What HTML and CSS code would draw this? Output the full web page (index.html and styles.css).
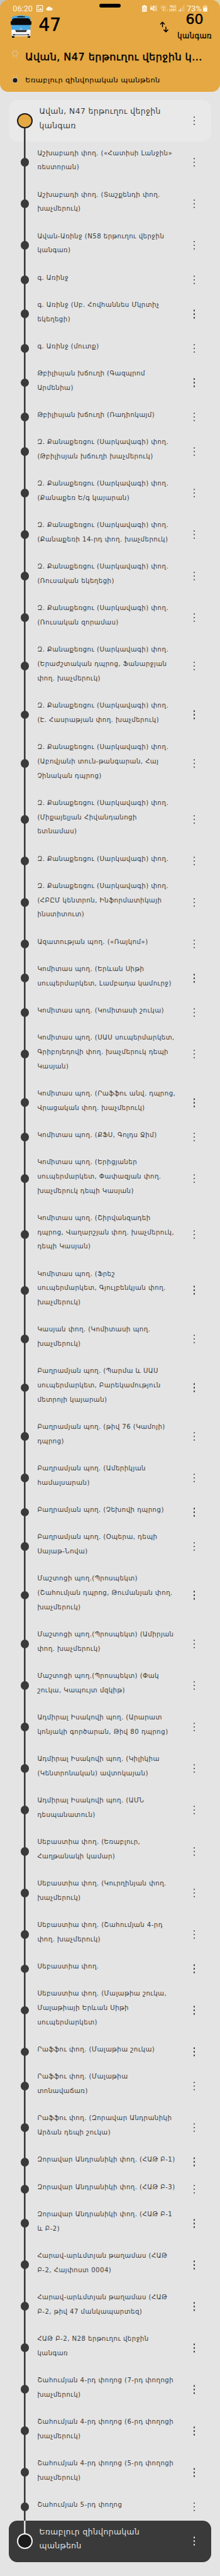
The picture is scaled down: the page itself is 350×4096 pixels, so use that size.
FILE: index.html
```html
<!DOCTYPE html>
<html lang="hy">
<head>
<meta charset="utf-8">
<title>47</title>
<link rel="stylesheet" href="styles.css">
</head>
<body>
<header class="header">
  <div class="status">
    <span class="clock">06:20</span>
    <svg class="s-pic" width="10.4" height="10.8" viewBox="0 0 20 20" preserveAspectRatio="none"><path fill-rule="evenodd" d="M2 0h16a2 2 0 0 1 2 2v16a2 2 0 0 1-2 2H2a2 2 0 0 1-2-2V2a2 2 0 0 1 2-2zm.4 2.4v15.2h15.2V2.400z"/><path d="M3.500 15.500l3.500-4.500 2.300 2.600L13 8.500l4 7z"/><circle cx="6" cy="6.500" r="1.700"/></svg>
    <svg class="s-cloud" width="11.200" height="6.800" viewBox="0 0 24 15"><path d="M5 15a5 5 0 0 1-.3-9.800A7 7 0 0 1 17.500 5 5 5 0 0 1 19 15z"/></svg>
    <span class="pill"></span>
    <span class="grow"></span>
    <svg class="s-save" width="7.600" height="10.800" viewBox="0 0 14 20"><path d="M4.500 0h5v2H12a2 2 0 0 1 2 2v14a2 2 0 0 1-2 2H2a2 2 0 0 1-2-2V4a2 2 0 0 1 2-2h2.500z"/><path class="cut" d="M7 7l2.500 4M10.800 12l-1 3H8M3.200 12l1 3H6M4.500 11L6.500 7.500"/></svg>
    <svg class="s-mute" width="10.800" height="10.600" viewBox="0 0 20 20"><path d="M0 6.500h3L12 15v4l-6-5H0zM6 5l6-5v11z"/><path class="ln" d="M.5 1l11.500 13"/><path class="ln" d="M14.500 3l1.500 2-1.500 2.500 1.500 2.500-1.500 2.500 1.500 2.500-1.500 2.500M18.500 1L20 3.500 18.500 6 20 9l-1.500 3 1.500 3-1.500 3.500" transform="translate(-.8 0)"/></svg>
    <svg class="s-wifi" width="13.600" height="10.800" viewBox="0 0 25 20"><path class="ln faint" d="M1 6Q11 -3 21 6"/><path class="ln" d="M4 9.500Q11 3.500 18 9.500M7 13Q11 9.500 15 13"/><circle cx="11" cy="16" r="1.800"/><path class="ln faint thin" d="M17.500 12v7M15.500 17l2 2 2-2M22.500 19v-7M20.500 14l2-2 2 2"/></svg>
    <span class="volte"><b>Vo))</b><b>LTE1</b></span>
    <svg class="s-sig" width="9.600" height="10.200" viewBox="0 0 18 20"><path d="M0 15.500h2.400V20H0zM5 11h2.400v9H5z"/><path class="fade" d="M10 6h2.400v14H10zM15 0h2.400v20H15z"/></svg>
    <span class="pct">73%</span>
    <svg class="s-bat" width="6.800" height="10.600" viewBox="0 0 14 20" preserveAspectRatio="none"><path class="fade" d="M4 0h6v2h2a2 2 0 0 1 2 2v3H0V4a2 2 0 0 1 2-2h2z"/><path d="M0 7h14v11.500a1.500 1.500 0 0 1-1.500 1.500h-11A1.500 1.500 0 0 1 0 18.500z"/></svg>
  </div>
  <div class="route">
    <svg class="bus" width="33" height="36.200" viewBox="0 0 66 66" preserveAspectRatio="none">
      <path fill="#0b0b0b" d="M4 58h8v6a2 2 0 0 1-2 2H6a2 2 0 0 1-2-2zM54 58h8v6a2 2 0 0 1-2 2h-4a2 2 0 0 1-2-2z"/>
      <path fill="#4aa8e2" d="M3 45V11Q3 4 10 3Q33-2.500 56 3Q63 4 63 11V45z"/>
      <path fill="#f4f4f6" d="M3 43H63V57Q63 61 59 61H7Q3 61 3 57z"/>
      <path fill="#0b0b0b" d="M0 18H3Q5 9 12 9H54Q61 9 63 18H66V28H63V28.500H3V28H0zM20 4.500Q33 1.500 46 4.500V6.500H20zM15 43.500H51L49 49H17z"/>
      <path fill="#2f2d35" d="M7 55h6v1h40v-1h6v4h-6v-1H13v1H7z"/>
      <path fill="#fff" d="M3.500 43h8l3 5-5 1.500-6-1zM62.500 43h-8l-3 5 5 1.500 6-1z"/>
      <ellipse cx="33" cy="40" rx="4" ry="2.200" fill="none" stroke="#c6dff0" stroke-width=".8"/>
      <path fill="none" stroke="#c6dff0" stroke-width=".8" d="M31 41.500l1-3 2 3 1-3M18 45.500h30"/>
    </svg>
    <span class="number">47</span>
    <span class="grow"></span>
    <svg class="swap" width="15" height="18" viewBox="0 0 15 18"><path d="M4.500 9.300V1.300M1 4.800l3.500-3.500L8 4.800M9.900 8.400v8.200M6.300 13.100l3.600 3.500 3.600-3.500"/></svg>
    <div class="count"><span class="sixty">60</span><span class="unit">կանգառ</span></div>
  </div>
  <div class="end from">
    <svg class="mark" width="14" height="24" viewBox="0 0 14 24"><path class="leg" d="M4.600 10.500v4M9.300 10.500v4"/><circle class="hollow" cx="7" cy="6" r="4.100"/></svg>
    <span>Ավան, N47 երթուղու վերջին կ...</span>
  </div>
  <div class="end to">
    <svg class="mark" width="14" height="20" viewBox="0 0 14 20"><path class="leg" d="M4.600 1.400v5.500M9.300 1.400v5.500"/><circle class="solid" cx="7" cy="10.800" r="4.100"/></svg>
    <span>Եռաբլուր զինվորական պանթեոն</span>
  </div>
</header>
<ul class="stops">
  <li class="stop first"><p>Ավան, N47 երթուղու վերջին<br>կանգառ</p></li>
  <li class="stop"><p>Աշխաբադի փող. («Հատիսի Լանջին»<br>ռեստորան)</p></li>
  <li class="stop"><p>Աշխաբադի փող. (Տաշքենդի փող.<br>խաչմերուկ)</p></li>
  <li class="stop"><p>Ավան-Առինջ (N58 երթուղու վերջին<br>կանգառ)</p></li>
  <li class="stop"><p>գ. Առինջ</p></li>
  <li class="stop"><p>գ. Առինջ (Սբ. Հովհաննես Մկրտիչ<br>եկեղեցի)</p></li>
  <li class="stop"><p>գ. Առինջ (մուտք)</p></li>
  <li class="stop"><p>Թբիլիսյան խճուղի (Գազպրոմ<br>Արմենիա)</p></li>
  <li class="stop"><p>Թբիլիսյան խճուղի (Ռադիոկայմ)</p></li>
  <li class="stop"><p>Զ. Քանաքեռցու (Սարկավագի) փող.<br>(Թբիլիսյան խճուղի խաչմերուկ)</p></li>
  <li class="stop"><p>Զ. Քանաքեռցու (Սարկավագի) փող.<br>(Քանաքեռ Ե/գ կայարան)</p></li>
  <li class="stop"><p>Զ. Քանաքեռցու (Սարկավագի) փող.<br>(Քանաքեռի 14-րդ փող. խաչմերուկ)</p></li>
  <li class="stop"><p>Զ. Քանաքեռցու (Սարկավագի) փող.<br>(Ռուսական եկեղեցի)</p></li>
  <li class="stop"><p>Զ. Քանաքեռցու (Սարկավագի) փող.<br>(Ռուսական զորամաս)</p></li>
  <li class="stop"><p>Զ. Քանաքեռցու (Սարկավագի) փող.<br>(Երաժշտական դպրոց, Ֆանարջյան<br>փող. խաչմերուկ)</p></li>
  <li class="stop"><p>Զ. Քանաքեռցու (Սարկավագի) փող.<br>(Է. Հասրաթյան փող. խաչմերուկ)</p></li>
  <li class="stop"><p>Զ. Քանաքեռցու (Սարկավագի) փող.<br>(Աբովյանի տուն-թանգարան, Հայ<br>Չինական դպրոց)</p></li>
  <li class="stop"><p>Զ. Քանաքեռցու (Սարկավագի) փող.<br>(Միքայելյան Հիվանդանոցի<br>ետնամաս)</p></li>
  <li class="stop"><p>Զ. Քանաքեռցու (Սարկավագի) փող.</p></li>
  <li class="stop"><p>Զ. Քանաքեռցու (Սարկավագի) փող.<br>(ՀԲԸՄ կենտրոն, Ինֆորմատիկայի<br>ինստիտուտ)</p></li>
  <li class="stop"><p>Ազատության պող. («Ռայկոմ»)</p></li>
  <li class="stop"><p>Կոմիտաս պող. (Երևան Սիթի<br>սուպերմարկետ, Լամբադա կամուրջ)</p></li>
  <li class="stop"><p>Կոմիտաս պող. (Կոմիտասի շուկա)</p></li>
  <li class="stop"><p>Կոմիտաս պող. (ՍԱՍ սուպերմարկետ,<br>Գրիբոյեդովի փող. խաչմերուկ դեպի<br>Կասյան)</p></li>
  <li class="stop"><p>Կոմիտաս պող. (Րաֆֆու անվ. դպրոց,<br>Վրացական փող. խաչմերուկ)</p></li>
  <li class="stop"><p>Կոմիտաս պող. (ՔՖՍ, Գոլդս Ջիմ)</p></li>
  <li class="stop"><p>Կոմիտաս պող. (Երիցյաներ<br>սուպերմարկետ, Փափազյան փող.<br>խաչմերուկ դեպի Կասյան)</p></li>
  <li class="stop"><p>Կոմիտաս պող. (Շիրվանզադեի<br>դպրոց, Վաղարշյան փող. խաչմերուկ,<br>դեպի Կասյան)</p></li>
  <li class="stop"><p>Կոմիտաս պող. (Ֆրեշ<br>սուպերմարկետ, Գյուլբենկյան փող.<br>խաչմերուկ)</p></li>
  <li class="stop"><p>Կասյան փող. (Կոմիտասի պող.<br>խաչմերուկ)</p></li>
  <li class="stop"><p>Բաղրամյան պող. (Պարմա և ՍԱՍ<br>սուպերմարկետ, Բարեկամություն<br>մետրոյի կայարան)</p></li>
  <li class="stop"><p>Բաղրամյան պող. (թիվ 76 (Կամոյի)<br>դպրոց)</p></li>
  <li class="stop"><p>Բաղրամյան պող. (Ամերիկյան<br>համալսարան)</p></li>
  <li class="stop"><p>Բաղրամյան պող. (Չեխովի դպրոց)</p></li>
  <li class="stop"><p>Բաղրամյան պող. (Օպերա, դեպի<br>Սայաթ-Նովա)</p></li>
  <li class="stop"><p>Մաշտոցի պող.(Պրոսպեկտ)<br>(Շահումյան դպրոց, Թումանյան փող.<br>խաչմերուկ)</p></li>
  <li class="stop"><p>Մաշտոցի պող.(Պրոսպեկտ) (Ամիրյան<br>փող. խաչմերուկ)</p></li>
  <li class="stop"><p>Մաշտոցի պող.(Պրոսպեկտ) (Փակ<br>շուկա, Կապույտ մզկիթ)</p></li>
  <li class="stop"><p>Ադմիրալ Իսակովի պող. (Արարատ<br>կոնյակի գործարան, Թիվ 80 դպրոց)</p></li>
  <li class="stop"><p>Ադմիրալ Իսակովի պող. (Կիլիկիա<br>(Կենտրոնական) ավտոկայան)</p></li>
  <li class="stop"><p>Ադմիրալ Իսակովի պող. (ԱՄՆ<br>դեսպանատուն)</p></li>
  <li class="stop"><p>Սեբաստիա փող. (Եռաբլուր,<br>Հաղթանակի կամար)</p></li>
  <li class="stop"><p>Սեբաստիա փող. (Կուրղինյան փող.<br>խաչմերուկ)</p></li>
  <li class="stop"><p>Սեբաստիա փող. (Շահումյան 4-րդ<br>փող. խաչմերուկ)</p></li>
  <li class="stop"><p>Սեբաստիա փող.</p></li>
  <li class="stop"><p>Սեբաստիա փող. (Մալաթիա շուկա,<br>Մալաթիայի Երևան Սիթի<br>սուպերմարկետ)</p></li>
  <li class="stop"><p>Րաֆֆու փող. (Մալաթիա շուկա)</p></li>
  <li class="stop"><p>Րաֆֆու փող. (Մալաթիա<br>տոնավաճառ)</p></li>
  <li class="stop"><p>Րաֆֆու փող. (Զորավար Անդրանիկի<br>Արձան դեպի շուկա)</p></li>
  <li class="stop"><p>Զորավար Անդրանիկի փող. (ՀԱԹ Բ-1)</p></li>
  <li class="stop"><p>Զորավար Անդրանիկի փող. (ՀԱԹ Բ-3)</p></li>
  <li class="stop"><p>Զորավար Անդրանիկի փող. (ՀԱԹ Բ-1<br>և Բ-2)</p></li>
  <li class="stop"><p>Հարավ-արևմտյան թաղամաս (ՀԱԹ<br>Բ-2, Հայփոստ 0004)</p></li>
  <li class="stop"><p>Հարավ-արևմտյան թաղամաս (ՀԱԹ<br>Բ-2, թիվ 47 մանկապարտեզ)</p></li>
  <li class="stop"><p>ՀԱԹ Բ-2, N28 երթուղու վերջին<br>կանգառ</p></li>
  <li class="stop"><p>Շահումյան 4-րդ փողոց (7-րդ փողոցի<br>խաչմերուկ)</p></li>
  <li class="stop"><p>Շահումյան 4-րդ փողոց (6-րդ փողոցի<br>խաչմերուկ)</p></li>
  <li class="stop"><p>Շահումյան 4-րդ փողոց (5-րդ փողոցի<br>խաչմերուկ)</p></li>
  <li class="stop"><p>Շահումյան 5-րդ փողոց</p></li>
  <li class="stop last"><p>Եռաբլուր զինվորական<br>պանթեոն</p></li>
</ul>
</body>
</html>
```
FILE: styles.css
```css
* { box-sizing: border-box; }
html { background: #e4e4e4; }
body {
  margin: 0;
  width: 350px;
  height: 4096px;
  overflow: hidden;
  background: linear-gradient(90deg, #c4c4c4, #ddd3a8) 0 0 / 100% 40px no-repeat #e4e4e4;
  font-family: "DejaVu Sans", sans-serif;
  letter-spacing: .44px;
  color: #3c3c3c;
}

/* Header */
.header {
  position: relative;
  height: 145.500px;
  padding: 6px 10.400px 0 16.750px;
  background: #e5a842;
  border-radius: 13px;
  color: #000;
}
.grow { flex: 1; }
.status {
  display: flex;
  align-items: center;
  height: 15px;
  padding: 0 10.100px 0 3.600px;
  font-family: Roboto, sans-serif;
  letter-spacing: 0;
  font-size: 12.700px;
  color: #fff5e2;
}
.status svg { fill: #fff5e2; overflow: visible; }
.ln { fill: none; stroke: #fff5e2; stroke-width: 1.800; }
.cut { fill: none; stroke: #e5a842; stroke-width: 1.500; }
.faint { opacity: .5; }
.thin { stroke-width: 1.300; }
.fade { opacity: .45; }
.clock { width: 37.200px; }
.s-cloud { margin-left: 5px; }
.pill {
  position: absolute;
  left: 158px;
  top: 6.400px;
  width: 34px;
  height: 5.900px;
  border-radius: 3px;
  background: #000;
}
.s-mute { margin-left: 5.200px; }
.s-wifi { margin-left: 4px; }
.volte {
  display: flex;
  flex-direction: column;
  width: 12.700px;
  margin-left: 1.600px;
  font-size: 5.400px;
  line-height: 5.300px;
  text-align: center;
  white-space: nowrap;
}
.volte b { font-weight: 700; }
.s-sig { margin-left: 2px; }
.pct { margin-left: 4px; width: 25.500px; white-space: nowrap; }

.route { display: flex; align-items: flex-start; height: 58.300px; }
.bus { margin: 2.900px 0 0 .65px; }
.number {
  margin: 3.900px 0 0 11px;
  font-size: 28px;
  line-height: 30px;
  letter-spacing: 0;
  -webkit-text-stroke: .5px #000;
}
.swap {
  margin: 12.700px 10.500px 0 0;
  fill: none;
  stroke: #000;
  stroke-width: 1.500;
}
.count {
  display: flex;
  flex-direction: column;
  align-items: center;
  gap: 8.100px;
  width: 60px;
}
.sixty {
  margin-top: .3px;
  font-size: 22px;
  line-height: 20px;
  letter-spacing: 0;
  -webkit-text-stroke: .5px #000;
}
.unit { font-size: 11.500px; line-height: 16px; -webkit-text-stroke: .3px #000; }

.end { display: flex; gap: 9.450px; white-space: nowrap; }
.mark { flex: none; fill: none; }
.hollow { stroke: #d9cfba; stroke-width: 1; }
.solid { stroke: #d9cfba; stroke-width: 1; fill: #1b1b1b; }
.leg { stroke: #d9cfba; stroke-width: .8; opacity: .6; }
.from {
  font-size: 16.070px;
  line-height: 24px;
  -webkit-text-stroke: .45px #000;
}
.to { margin-top: 13.600px; font-size: 11.370px; line-height: 20px; }

/* Stop list */
.stops { margin: 13.700px 0 0; padding: 0 13.600px; list-style: none; }
.stop {
  --line: #3a3a3a;
  --kebab: #3a3a3a;
  display: grid;
  grid-template-columns: 12.400px 27px 1fr 30px;
  align-items: center;
  grid-template-rows: auto;
  padding: 0 12.300px 0 0;
  background: linear-gradient(var(--line), var(--line)) 24.800px 0 / 2.600px 100% no-repeat;
}
.stop p {
  grid-column: 3;
  grid-row: 1;
  margin: 0;
  padding: 7.400px 0 12.995px 6.400px;
  font-size: 10.200px;
  line-height: 22.820px;
  white-space: nowrap;
}
.stop::before {
  content: "";
  grid-column: 2;
  grid-row: 1;
  justify-self: center;
  width: 13.800px;
  height: 13.800px;
  border-radius: 50%;
  background: #3a3a3a;
}
.stop::after {
  content: "";
  grid-column: 4;
  grid-row: 1;
  justify-self: center;
  width: 2.400px;
  height: 2.400px;
  border-radius: 50%;
  background: var(--kebab);
  box-shadow: 0 -5.800px var(--kebab), 0 5.800px var(--kebab);
}
.first, .last { border-radius: 13.500px; }
.first p, .last p { padding-left: 9.500px; font-size: 12.320px; padding-top: 7px; padding-bottom: 13.400px; }
.first {
  background: linear-gradient(var(--line), var(--line)) 24.800px 100% / 2.600px 50% no-repeat #e9e9e9;
}
.first::before, .last::before { width: 20.500px; height: 20.500px; }
.first::before { border: 2.400px solid #1b1b19; background: #e5a842; }
.last {
  --line: #dedede;
  --kebab: #eaeaea;
  color: #e2e2e2;
  background: linear-gradient(var(--line), var(--line)) 24.800px 0 / 2.600px 50% no-repeat #3a3a3a;
}
.last::before { border: 2.400px solid #f2f2f2; background: #1b1b1b; }
```
